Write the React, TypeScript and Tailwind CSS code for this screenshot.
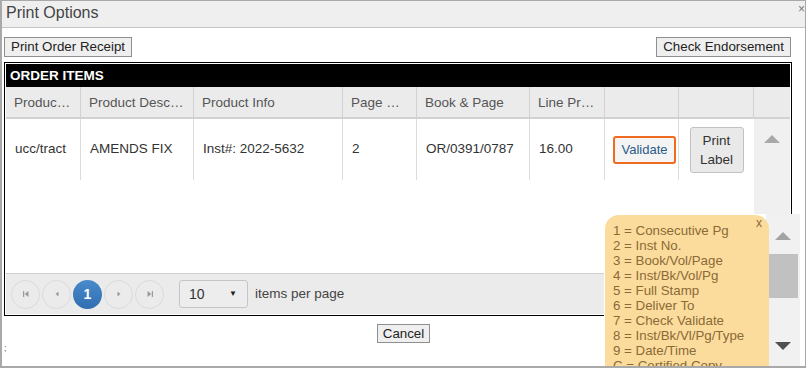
const columns = ["Produc…", "Product Desc…", "Product Info", "Page …", "Book & Page", "Line Pr…", "", ""];
const row = ["ucc/tract", "AMENDS FIX", "Inst#: 2022-5632", "2", "OR/0391/0787", "16.00"];

const stampCodes = [
  "1 = Consecutive Pg",
  "2 = Inst No.",
  "3 = Book/Vol/Page",
  "4 = Inst/Bk/Vol/Pg",
  "5 = Full Stamp",
  "6 = Deliver To",
  "7 = Check Validate",
  "8 = Inst/Bk/Vl/Pg/Type",
  "9 = Date/Time",
  "C = Certified Copy",
];

const gridCols = "grid grid-cols-[75px_113px_149px_74px_113px_75px_74px_75px_36px]";

const PagerButton = ({ children }: { children: React.ReactNode }) => (
  <div className="flex h-[29px] w-[29px] items-center justify-center rounded-full border border-[#dadada] text-[#9a9a9a]">
    {children}
  </div>
);

const PagerIcon = ({ kind }: { kind: "first" | "prev" | "next" | "last" }) => (
  <svg width="8" height="8" viewBox="0 0 8 8" fill="#9a9a9a">
    {kind === "first" && (
      <>
        <rect x="1" y="1" width="1.2" height="6" />
        <path d="M6.5 1 L2.6 4 L6.5 7 Z" />
      </>
    )}
    {kind === "prev" && <path d="M5.5 1.5 L2.5 4 L5.5 6.5 Z" />}
    {kind === "next" && <path d="M2.5 1.5 L5.5 4 L2.5 6.5 Z" />}
    {kind === "last" && (
      <>
        <path d="M1.5 1 L5.4 4 L1.5 7 Z" />
        <rect x="5.8" y="1" width="1.2" height="6" />
      </>
    )}
  </svg>
);

const StampPopup = () => {
  return (
    <div className="absolute left-[602px] top-[213px] flex h-[170px] w-[196px] bg-white">
      <div className="relative z-10 ml-[1px] mt-[1px] h-[200px] w-[164px] rounded-[14px] bg-[#fcdc9d] pl-[8px] pt-[8px] text-[13.3px] leading-[15px] text-[#8a6a36]">
        <span className="absolute right-[7px] top-[1px] text-[12px] leading-[14px]">x</span>
        {stampCodes.map((code) => (
          <div key={code}>{code}</div>
        ))}
      </div>
      <div className="ml-[-3px] flex w-[34px] flex-col items-center bg-[#f1f1f1]">
        <div className="mt-[18px] h-0 w-0 border-x-[8px] border-b-[8px] border-x-transparent border-b-[#a3a3a3]" />
        <div className="ml-[-1px] mt-[14px] h-[44px] w-[33px] self-start bg-[#c1c1c1]" />
        <div className="mt-[44px] h-0 w-0 border-x-[8px] border-t-[8px] border-x-transparent border-t-[#505050]" />
      </div>
    </div>
  );
};

export default function App() {
  return (
    <div className="h-[369px] w-[807px] overflow-hidden bg-white font-['Liberation_Sans',Arial,sans-serif] text-[#333]">
      <div className="relative h-[368px] w-[806px] overflow-hidden border-b-2 border-l-2 border-r border-t border-[#a9a9a9]">
        {/* title bar */}
        <div className="relative h-[27px] border-b border-[#c4c4c4] bg-[#efefef] pl-[4px] text-[16px] leading-[24px] text-[#444]">
          Print Options
          <span className="absolute right-[0px] top-[-4px] text-[12px] text-[#777]">×</span>
        </div>

        <div className="ml-[2px] mt-[9px] flex w-[788px] justify-between">
          <button className="h-[20px] border border-[#8f8f8f] bg-[#efefef] px-[6px] text-[13.33px] leading-[16px] text-[#222]">
            Print Order Receipt
          </button>
          <button className="mr-[1px] h-[20px] border border-[#8f8f8f] bg-[#efefef] px-[6px] text-[13.33px] leading-[16px] text-[#222]">
            Check Endorsement
          </button>
        </div>

        {/* order items grid */}
        <div className="ml-[2px] mt-[5px] w-[788px] border border-black p-[1px] text-[13.5px]">
          <div className="h-[23px] bg-black pl-[4px] text-[13.5px] font-bold leading-[23px] text-white">ORDER ITEMS</div>
          <div className={`${gridCols} h-[32px] border-b-2 border-[#d2d2d2] bg-[#ebebeb] text-[#555]`}>
            {columns.map((col, i) => (
              <div key={i} className="border-r border-[#d2d2d2] pl-[8px] leading-[31px]">
                {col}
              </div>
            ))}
            <div />
          </div>

          <div className="flex h-[154px]">
            <div className="grid h-[61px] w-[748px] grid-cols-[75px_113px_149px_74px_113px_75px_74px_75px]">
              {row.map((cell, i) => (
                <div key={i} className="flex items-center border-r border-[#dcdcdc] pl-[9px]">
                  {cell}
                </div>
              ))}
              <div className="flex items-center border-r border-[#dcdcdc] pl-[8px]">
                <button className="h-[28px] w-[63px] rounded-[3px] border-2 border-[#f06a1f] bg-[#f4f4f4] text-[13px] text-[#2b5a8a]">
                  Validate
                </button>
              </div>
              <div className="flex items-center justify-center">
                <button className="h-[46px] w-[54px] rounded-[3px] border border-[#c2c2c2] bg-[#e9e9e9] text-[13.5px] leading-[19px] text-[#333]">
                  Print
                  <br />
                  Label
                </button>
              </div>
            </div>
            <div className="flex w-[36px] justify-center bg-[#f0f0f0]">
              <div className="mt-[16px] h-0 w-0 border-x-[8px] border-b-[8px] border-x-transparent border-b-[#a9a9a9]" />
            </div>
          </div>

          {/* pager */}
          <div className="flex h-[41px] items-center gap-[2px] border-t border-[#cfcfcf] bg-[#ebebeb] pl-[5px]">
            <PagerButton>
              <PagerIcon kind="first" />
            </PagerButton>
            <PagerButton>
              <PagerIcon kind="prev" />
            </PagerButton>
            <div className="flex h-[29px] w-[29px] items-center justify-center rounded-full bg-gradient-to-b from-[#4a8bcb] to-[#2f6eb0] text-[14px] font-bold text-white">
              1
            </div>
            <PagerButton>
              <PagerIcon kind="next" />
            </PagerButton>
            <PagerButton>
              <PagerIcon kind="last" />
            </PagerButton>
            <div className="ml-[13px] flex h-[28px] w-[69px] items-center justify-between rounded-[3px] border border-[#c6c6c6] bg-[#ededed] pl-[9px] pr-[10px] text-[14px]">
              <span>10</span>
              <span className="text-[8px] text-[#222]">▼</span>
            </div>
            <span className="ml-[5px] text-[13.5px] text-[#444]">items per page</span>
          </div>
        </div>

        <div className="mt-[8px] flex justify-center">
          <button className="h-[19px] border border-[#8f8f8f] bg-[#efefef] px-[5px] text-[13.33px] leading-[16px] text-[#222]">
            Cancel
          </button>
        </div>
        <div className="pl-[2px] text-[9px] leading-[10px] text-[#666]">;</div>

        <StampPopup />
      </div>
    </div>
  );
}
